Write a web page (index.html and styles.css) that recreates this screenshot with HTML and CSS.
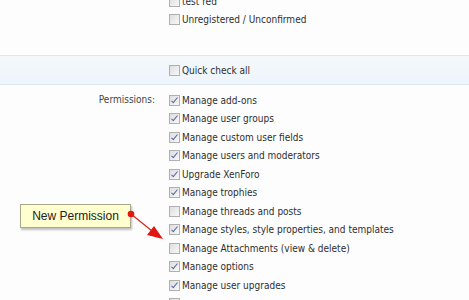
FILE: index.html
```html
<!DOCTYPE html>
<html>
<head>
<meta charset="utf-8">
<link rel="stylesheet" href="styles.css">
</head>
<body>
<div class="page">
  <div class="section top">
    <div class="label"></div>
    <ul class="checks">
      <li><span class="cb"></span>test red</li>
      <li><span class="cb"></span>Unregistered / Unconfirmed</li>
    </ul>
  </div>
  <div class="band">
    <div class="label"></div>
    <ul class="checks">
      <li><span class="cb"></span>Quick check all</li>
    </ul>
  </div>
  <div class="section perms">
    <div class="label">Permissions:</div>
    <ul class="checks">
      <li><span class="cb on"></span>Manage add-ons</li>
      <li><span class="cb on"></span>Manage user groups</li>
      <li><span class="cb on"></span>Manage custom user fields</li>
      <li><span class="cb on"></span>Manage users and moderators</li>
      <li><span class="cb on"></span>Upgrade XenForo</li>
      <li><span class="cb on"></span>Manage trophies</li>
      <li><span class="cb"></span>Manage threads and posts</li>
      <li><span class="cb on"></span>Manage styles, style properties, and templates</li>
      <li><span class="cb"></span>Manage Attachments (view &amp; delete)</li>
      <li><span class="cb on"></span>Manage options</li>
      <li><span class="cb on"></span>Manage user upgrades</li>
      <li><span class="cb"></span></li>
    </ul>
  </div>
  <div class="callout">New Permission</div>
  <svg class="arrow" width="60" height="40" viewBox="0 0 60 40">
    <line x1="5" y1="6" x2="26" y2="23" stroke="#d9261c" stroke-width="1.2"/>
    <polygon points="37,31 21,27 28,18" fill="#e2170f"/>
    <circle cx="5" cy="6" r="3.3" fill="#e2170f"/>
  </svg>
</div>
</body>
</html>
```
FILE: styles.css
```css
html, body {
  margin: 0;
  padding: 0;
  background: #fdfdfe;
}
body {
  width: 469px;
  height: 300px;
  overflow: hidden;
  font-family: "DejaVu Sans Condensed", "DejaVu Sans", sans-serif;
  font-size: 10px;
  color: #2e2e2e;
}
.page {
  position: relative;
}
.section, .band {
  display: flex;
}
.label {
  width: 155px;
  padding-right: 14px;
  text-align: right;
  color: #444;
  line-height: 18.5px;
  flex: none;
}
.checks {
  list-style: none;
  margin: 0;
  padding: 0;
}
.checks li {
  height: 18.5px;
  display: flex;
  align-items: center;
  white-space: nowrap;
}
.top {
  margin-top: -8px;
}
.band {
  margin-top: 26px;
  height: 28px;
  border-top: 1px solid #dde9f2;
  border-bottom: 1px solid #dde9f2;
  background: linear-gradient(#f3f8fc, #eef5fb);
  align-items: center;
}
.perms {
  margin-top: 6px;
}
.cb {
  width: 9px;
  height: 9px;
  border: 1px solid #b0b0b0;
  background: linear-gradient(135deg, #dedede, #f8f8f8);
  margin-right: 2px;
  flex: none;
  position: relative;
}
.cb.on::after {
  content: "";
  position: absolute;
  left: 3px;
  top: 0px;
  width: 2px;
  height: 6px;
  border: solid #56649e;
  border-width: 0 1.5px 1.5px 0;
  transform: rotate(40deg);
}
.callout {
  position: absolute;
  left: 20px;
  top: 212px;
  width: 111px;
  height: 24px;
  box-sizing: border-box;
  border: 1px solid #a8a88a;
  background: #ffffcf;
  box-shadow: 1px 2px 2px rgba(0,0,0,0.25);
  font-family: "Liberation Sans", Arial, sans-serif;
  font-size: 12px;
  color: #222;
  display: flex;
  align-items: center;
  justify-content: center;
}
.arrow {
  position: absolute;
  left: 126px;
  top: 216px;
}
```
